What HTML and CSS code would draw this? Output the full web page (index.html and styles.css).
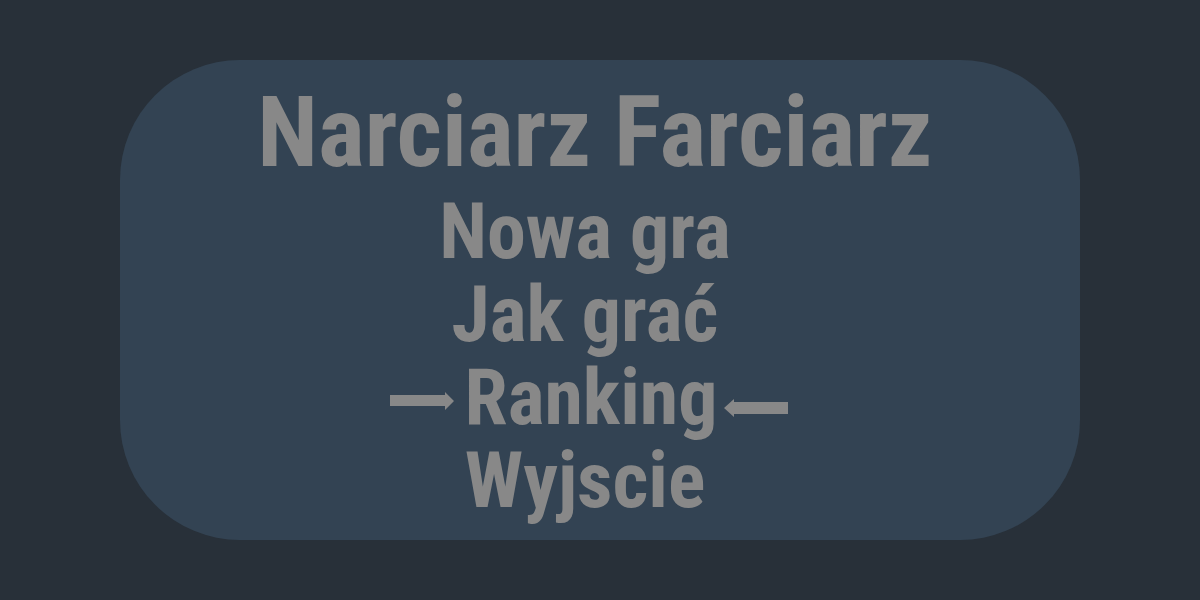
FILE: index.html
```html
<!DOCTYPE html>
<html lang="pl">
<head>
<meta charset="utf-8">
<title>Narciarz Farciarz</title>
<link rel="stylesheet" href="styles.css">
</head>
<body>
<main class="panel">
  <h1 class="title">Narciarz Farciarz</h1>
  <ul class="menu">
    <li class="item">Nowa gra</li>
    <li class="item">Jak grać</li>
    <li class="item selected">
      <svg class="arrow arrow-left" width="64" height="18" viewBox="0 0 64 18"><path d="M0 3H55V0L64 9L55 18V14H0Z" fill="#888888"/></svg>
      <span class="label">Ranking</span>
      <svg class="arrow arrow-right" width="64" height="18" viewBox="0 0 64 18"><path d="M64 3H10V0L0 9L10 18V15H64Z" fill="#888888"/></svg>
    </li>
    <li class="item">Wyjscie</li>
  </ul>
</main>
</body>
</html>
```
FILE: styles.css
```css
html, body {
  margin: 0;
  padding: 0;
}
body {
  width: 1200px;
  height: 600px;
  background: #283039;
  display: flex;
  align-items: center;
  justify-content: center;
  font-family: "Roboto", "Liberation Sans", sans-serif;
  font-stretch: condensed;
  font-weight: 700;
  color: #888888;
}
.panel {
  width: 960px;
  height: 480px;
  box-sizing: border-box;
  border-radius: 120px;
  background: #334353;
  padding-top: 22px;
  display: flex;
  flex-direction: column;
  align-items: center;
}
.title {
  margin: 0;
  padding-right: 10px;
  font-size: 99px;
  line-height: 100px;
  font-weight: 700;
}
.menu {
  list-style: none;
  margin: 8px 0 0;
  padding: 0 30px 0 0;
  display: flex;
  flex-direction: column;
  align-items: center;
}
.item {
  font-size: 78px;
  line-height: 83px;
  height: 83px;
  display: flex;
  align-items: flex-start;
  justify-content: center;
}
.selected {
  margin-left: 8px;
}
.arrow {
  flex: none;
  display: block;
}
.arrow-left {
  margin-top: 36px;
  margin-right: 11px;
}
.arrow-right {
  margin-top: 43px;
  margin-left: 7px;
}
```
